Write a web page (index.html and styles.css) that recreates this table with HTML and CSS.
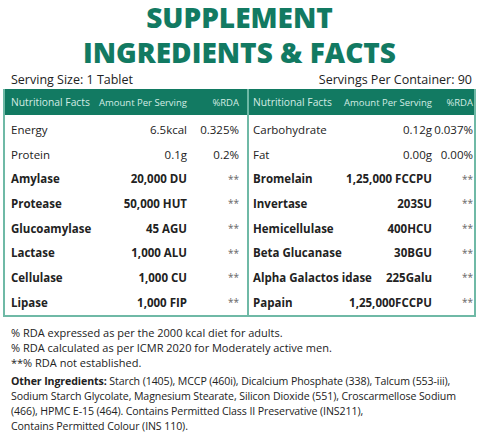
FILE: index.html
```html
<!DOCTYPE html>
<html lang="en">
<head>
	<meta charset="UTF-8">
	<title>Supplement Facts</title>
	<link rel="stylesheet" href="styles.css">
</head>
<body>
	<h1 class="title">SUPPLEMENT<br>INGREDIENTS &amp; FACTS</h1>

	<div class="serving">
		<span>Serving Size: 1 Tablet</span>
		<span>Servings Per Container: 90</span>
	</div>

	<div class="facts">
		<div class="half left">
			<div class="row head">
				<div class="label">Nutritional Facts</div>
				<div class="num">Amount Per Serving</div>
				<div class="num">%RDA</div>
			</div>
			<div class="row"><div>Energy</div><div class="num">6.5kcal</div><div class="num">0.325%</div></div>
			<div class="row"><div>Protein</div><div class="num">0.1g</div><div class="num">0.2%</div></div>
			<div class="row bold"><div>Amylase</div><div class="num">20,000 DU</div><div class="num star">**</div></div>
			<div class="row bold"><div>Protease</div><div class="num">50,000 HUT</div><div class="num star">**</div></div>
			<div class="row bold"><div>Glucoamylase</div><div class="num">45 AGU</div><div class="num star">**</div></div>
			<div class="row bold"><div>Lactase</div><div class="num">1,000 ALU</div><div class="num star">**</div></div>
			<div class="row bold"><div>Cellulase</div><div class="num">1,000 CU</div><div class="num star">**</div></div>
			<div class="row bold"><div>Lipase</div><div class="num">1,000 FIP</div><div class="num star">**</div></div>
		</div>
		<div class="half right">
			<div class="row head">
				<div class="label">Nutritional Facts</div>
				<div class="num">Amount Per Serving</div>
				<div class="num">%RDA</div>
			</div>
			<div class="row"><div>Carbohydrate</div><div class="num">0.12g</div><div class="num">0.037%</div></div>
			<div class="row"><div>Fat</div><div class="num">0.00g</div><div class="num">0.00%</div></div>
			<div class="row bold"><div>Bromelain</div><div class="num">1,25,000 FCCPU</div><div class="num star">**</div></div>
			<div class="row bold"><div>Invertase</div><div class="num">203SU</div><div class="num star">**</div></div>
			<div class="row bold"><div>Hemicellulase</div><div class="num">400HCU</div><div class="num star">**</div></div>
			<div class="row bold"><div>Beta Glucanase</div><div class="num">30BGU</div><div class="num star">**</div></div>
			<div class="row bold"><div>Alpha Galactos idase</div><div class="num">225Galu</div><div class="num star">**</div></div>
			<div class="row bold"><div>Papain</div><div class="num">1,25,000FCCPU</div><div class="num star">**</div></div>
		</div>
	</div>

	<div class="notes">
		<p>% RDA expressed as per the 2000 kcal diet for adults.</p>
		<p>% RDA calculated as per ICMR 2020 for Moderately active men.</p>
		<p>**% RDA not established.</p>
	</div>

	<p class="other"><b>Other Ingredients:</b> Starch (1405), MCCP (460i), Dicalcium Phosphate (338), Talcum (553-iii),<br>Sodium Starch Glycolate, Magnesium Stearate, Silicon Dioxide (551), Croscarmellose Sodium<br>(466), HPMC E-15 (464). Contains Permitted Class II Preservative (INS211),<br>Contains Permitted Colour (INS 110).</p>
</body>
</html>
```

FILE: styles.css
```css
*{
	margin: 0;
	padding: 0;
	box-sizing: border-box;
}
body{
	width: 480px;
	background: #fff;
	color: #222;
	font-family: "Open Sans", "Liberation Sans", sans-serif;
	padding: 0 4px 0 3px;
}
.title{
	color: #127a62;
	font-family: "Open Sans", "Liberation Sans", sans-serif;
	font-weight: 800;
	font-size: 28px;
	line-height: 35px;
	text-align: center;
}
.serving{
	display: flex;
	justify-content: space-between;
	font-size: 12.5px;
	line-height: 18px;
	padding: 1px 4px 0 8px;
	color: #222;
}
.facts{
	display: flex;
	border: 2px solid #6fb9a6;
	border-top: 0;
}
.half{
	display: flex;
	flex-direction: column;
	min-width: 0;
}
.half.left{
	width: 244px;
	border-right: 2px solid #6fb9a6;
}
.half.right{
	flex: 1;
}
.row{
	display: grid;
	height: 24.7px;
	align-items: center;
	font-size: 11.5px;
	color: #222;
	white-space: nowrap;
}
.left .row{
	grid-template-columns: minmax(0, 1fr) auto 52px;
	padding: 0 8px 0 6px;
}
.right .row{
	grid-template-columns: minmax(0, 1fr) auto 41px;
	padding: 0 1px 0 4px;
}
.row.head{
	background: #127a62;
	color: #d3ece4;
	font-size: 9.5px;
	height: 26px;
	margin-bottom: 2px;
}
.row.head .label{
	font-size: 10.3px;
}
.row.bold{
	font-weight: 700;
}
.num{
	text-align: right;
}
.star{
	font-weight: 400;
	color: #666;
	font-size: 10px;
}
.notes{
	padding: 8px 0 0 8px;
	font-size: 11px;
	line-height: 15px;
}
.other{
	padding: 4px 0 0 8px;
	font-size: 10.6px;
	line-height: 15px;
	white-space: nowrap;
	letter-spacing: -0.1px;
}
```
